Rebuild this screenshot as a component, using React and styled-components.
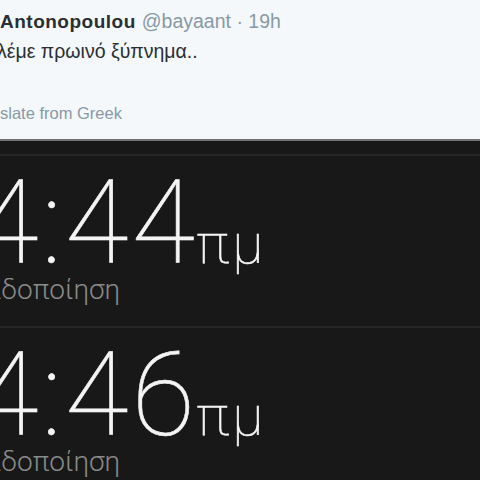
import React from 'react'
import styled, { createGlobalStyle } from 'styled-components'

const GlobalStyle = createGlobalStyle`
  html, body {
    margin: 0;
    padding: 0;
    background: #181818;
  }
  #root {
    width: 480px;
    height: 480px;
    overflow: hidden;
  }
`

const Tweet = styled.div`
  background: #f5f8fa;
  height: 141px;
  box-sizing: border-box;
  border-bottom: 2px solid #727272;
  padding-top: 10px;
  font-family: "Liberation Sans", Arial, sans-serif;
`

const Header = styled.div`
  display: flex;
  align-items: baseline;
  gap: 6px;
  line-height: 22px;
`

const Name = styled.span`
  font-weight: bold;
  font-size: 19px;
  letter-spacing: 0.5px;
  color: #292f33;
`

const Meta = styled.span`
  font-size: 19.5px;
  color: #8899a6;
`

const Text = styled.div`
  margin-top: 7px;
  margin-left: -3px;
  font-size: 19.5px;
  line-height: 22px;
  color: #292f33;
`

const Translate = styled.div`
  margin-top: 41px;
  font-size: 16.5px;
  line-height: 20px;
  color: #8899a6;
`

const Alarms = styled.div`
  padding-top: 13px;
`

const AlarmRow = styled.div`
  height: 159px;
  border-top: 2px solid #262626;
  padding-top: 11px;
  margin-left: -25px;
`

const Time = styled.div`
  display: flex;
  align-items: baseline;
  font-family: Roboto, "Open Sans", sans-serif;
  font-weight: 100;
  color: #f4f4f4;
  font-size: 116px;
  line-height: 112px;
  letter-spacing: 3px;
  -webkit-text-stroke: 0.6px #f4f4f4;
`

const Period = styled.span`
  font-size: 56px;
  line-height: 1;
  letter-spacing: 3px;
  margin-left: -2px;
`

const Label = styled.div`
  font-family: Roboto, "Open Sans", sans-serif;
  font-weight: 300;
  font-size: 28px;
  line-height: 30px;
  color: #8a8a8a;
  margin-top: -4px;
  margin-left: 2px;
`

const alarms = [
  { time: '4:44' },
  { time: '4:46' },
]

function Alarm ({ time }) {
  return (
    <AlarmRow>
      <Time>
        {time}
        <Period>πμ</Period>
      </Time>
      <Label>Ειδοποίηση</Label>
    </AlarmRow>
  )
}

export default function App () {
  return (
    <>
      <GlobalStyle />
      <Tweet>
        <Header>
          <Name>Antonopoulou</Name>
          <Meta>@bayaant · 19h</Meta>
        </Header>
        <Text>λέμε πρωινό ξύπνημα..</Text>
        <Translate>slate from Greek</Translate>
      </Tweet>
      <Alarms>
        {alarms.map(a => <Alarm key={a.time} time={a.time} />)}
      </Alarms>
    </>
  )
}
